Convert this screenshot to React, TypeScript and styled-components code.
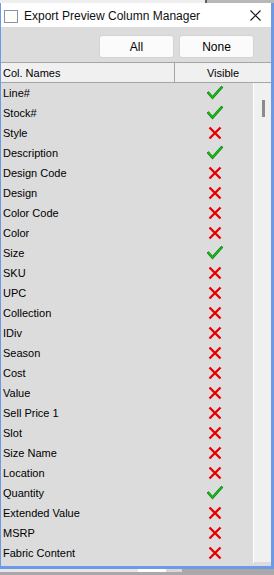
import React from "react";
import styled, { createGlobalStyle } from "styled-components";

const GlobalStyle = createGlobalStyle`
  html, body {
    margin: 0;
    padding: 0;
    background: #a9a9a9;
  }
  body {
    font-family: "Liberation Sans", Arial, sans-serif;
  }
`;

const Screen = styled.div`
  width: 274px;
  height: 575px;
  display: flex;
  flex-direction: column;
  overflow: hidden;
`;

const TopStrip = styled.div`
  height: 3px;
  display: flex;
  background: #efefef;
`;

const StripPart = styled.div<{ $w: number; $bg: string }>`
  width: ${({ $w }) => $w}px;
  flex: none;
  background: ${({ $bg }) => $bg};
`;

const Window = styled.div`
  height: 563px;
  display: flex;
  flex-direction: column;
  border-left: 1px solid #6d9ae6;
  border-right: 3px solid #6d9ae6;
  border-bottom: 3px solid #6d9ae6;
  background: #dcdcdc;
`;

const TitleBar = styled.div`
  height: 24px;
  flex: none;
  display: flex;
  align-items: center;
  background: #ffffff;
  padding-left: 3px;
`;

const TitleIcon = styled.div`
  width: 12px;
  height: 11px;
  border: 1px solid #8593b3;
  background: #fffff8;
  margin-right: 6px;
  margin-top: 2px;
`;

const TitleText = styled.div`
  flex: 1;
  font-size: 12px;
  color: #101010;
  margin-top: 1px;
`;

const CloseButton = styled.div`
  width: 12px;
  height: 12px;
  margin-right: 9px;
  margin-top: 2px;
  display: flex;
`;

const Toolbar = styled.div`
  height: 35px;
  flex: none;
  display: flex;
  justify-content: flex-end;
  align-items: flex-start;
  gap: 5px;
  padding: 8px 17px 0 0;
  box-sizing: border-box;
  background: #dcdcdc;
`;

const ToolButton = styled.div`
  width: 75px;
  height: 23px;
  box-sizing: border-box;
  border: 1px solid #d3d3d3;
  border-radius: 3px;
  background: #fbfbfb;
  display: flex;
  align-items: center;
  justify-content: center;
  font-size: 12px;
  color: #000;
`;

const Grid = styled.div`
  flex: 1;
  display: flex;
  flex-direction: column;
  min-height: 0;
`;

const HeaderRow = styled.div`
  height: 21px;
  flex: none;
  display: grid;
  grid-template-columns: 174px 1fr;
  background: #f0f0f0;
  border-top: 1px solid #a5a5a5;
  border-bottom: 1px solid #a5a5a5;
  box-sizing: border-box;
  height: 21px;
`;

const HeaderCell = styled.div<{ $center?: boolean }>`
  font-size: 11px;
  color: #000;
  display: flex;
  align-items: center;
  justify-content: ${({ $center }) => ($center ? "center" : "flex-start")};
  padding-left: ${({ $center }) => ($center ? "0" : "2px")};
  border-right: ${({ $center }) => ($center ? "none" : "1px solid #a5a5a5")};
`;

const Body = styled.div`
  flex: 1;
  display: flex;
  min-height: 0;
`;

const List = styled.div`
  width: 253px;
  flex: none;
  display: flex;
  flex-direction: column;
  border-right: 1px solid #ffffff;
  height: 480px;
  box-sizing: border-box;
  border-bottom: 1px solid #ffffff;
`;

const Row = styled.div`
  height: 20px;
  flex: none;
  display: grid;
  grid-template-columns: 174px 1fr;
  background: #dcdcdc;
`;

const NameCell = styled.div`
  font-size: 11px;
  color: #000;
  display: flex;
  align-items: center;
  padding-left: 2px;
  white-space: nowrap;
`;

const IconCell = styled.div`
  display: flex;
  align-items: center;
  justify-content: center;
  padding-left: 1px;
`;

const ScrollTrack = styled.div`
  width: 17px;
  flex: none;
  background: #f0f0f0;
  height: 479px;
  display: flex;
  justify-content: center;
  padding-top: 17px;
  box-sizing: border-box;
`;

const ScrollThumb = styled.div`
  width: 3px;
  height: 17px;
  background: #8b8b8b;
  margin-left: 1px;
`;

const CheckIcon = () => (
  <svg width="16" height="14" viewBox="0 0 16 14">
    <polyline
      points="1.5,7 5.5,11.5 14.5,1.5"
      fill="none"
      stroke="#0a7a0a"
      strokeWidth="2.6"
      strokeLinecap="square"
    />
    <polyline
      points="1.5,7 5.5,11.5 14.5,1.5"
      fill="none"
      stroke="#14c214"
      strokeWidth="1.4"
      strokeLinecap="square"
    />
  </svg>
);

const CrossIcon = () => (
  <svg width="14" height="14" viewBox="0 0 14 14">
    <path d="M1.5 1.5 L12.5 12.5 M12.5 1.5 L1.5 12.5" stroke="#e80000" strokeWidth="2.4" />
  </svg>
);

const CloseIcon = () => (
  <svg width="11" height="11" viewBox="0 0 11 11">
    <path d="M0.5 0.5 L10.5 10.5 M10.5 0.5 L0.5 10.5" stroke="#111" strokeWidth="1.1" />
  </svg>
);

const columns: [string, boolean][] = [
  ["Line#", true],
  ["Stock#", true],
  ["Style", false],
  ["Description", true],
  ["Design Code", false],
  ["Design", false],
  ["Color Code", false],
  ["Color", false],
  ["Size", true],
  ["SKU", false],
  ["UPC", false],
  ["Collection", false],
  ["IDiv", false],
  ["Season", false],
  ["Cost", false],
  ["Value", false],
  ["Sell Price 1", false],
  ["Slot", false],
  ["Size Name", false],
  ["Location", false],
  ["Quantity", true],
  ["Extended Value", false],
  ["MSRP", false],
  ["Fabric Content", false],
];

export default function App() {
  return (
    <>
      <GlobalStyle />
      <Screen>
        <TopStrip>
          <StripPart $w={205} $bg="#efefef" />
          <StripPart $w={2} $bg="#606060" />
          <StripPart $w={67} $bg="#b8b8b8" />
        </TopStrip>
        <Window>
          <TitleBar>
            <TitleIcon />
            <TitleText>Export Preview Column Manager</TitleText>
            <CloseButton>
              <CloseIcon />
            </CloseButton>
          </TitleBar>
          <Toolbar>
            <ToolButton>All</ToolButton>
            <ToolButton>None</ToolButton>
          </Toolbar>
          <Grid>
            <HeaderRow>
              <HeaderCell>Col. Names</HeaderCell>
              <HeaderCell $center>Visible</HeaderCell>
            </HeaderRow>
            <Body>
              <List>
                {columns.map(([name, visible]) => (
                  <Row key={name}>
                    <NameCell>{name}</NameCell>
                    <IconCell>{visible ? <CheckIcon /> : <CrossIcon />}</IconCell>
                  </Row>
                ))}
              </List>
              <ScrollTrack>
                <ScrollThumb />
              </ScrollTrack>
            </Body>
          </Grid>
        </Window>
        <TopStrip>
          <StripPart $w={138} $bg="#e6e6e6" />
          <StripPart $w={28} $bg="#ffffff" />
          <StripPart $w={16} $bg="#d8d8d8" />
          <StripPart $w={92} $bg="#a9a9a9" />
        </TopStrip>
      </Screen>
    </>
  );
}
